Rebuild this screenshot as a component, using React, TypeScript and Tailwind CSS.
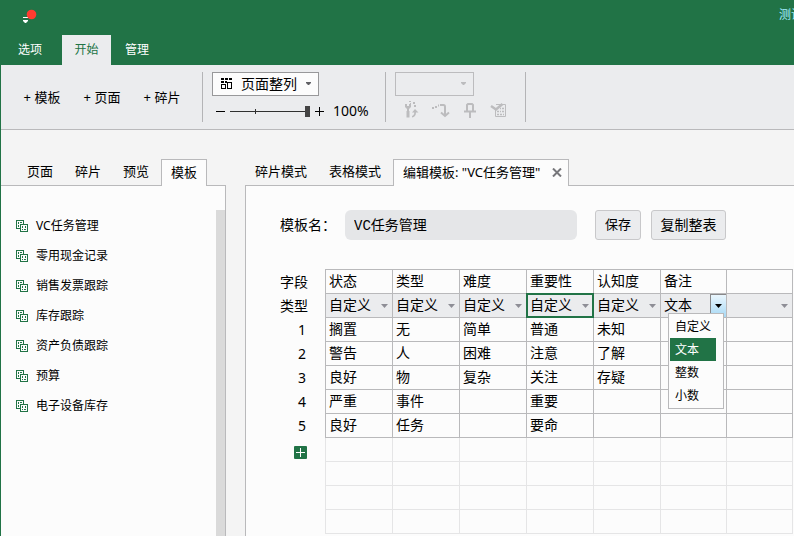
import React, { useState } from 'react';
import clsx from 'clsx';

const TYPES = ['自定义', '文本', '整数', '小数'];

const COLUMNS = [
  { name: '状态', type: '自定义' },
  { name: '类型', type: '自定义' },
  { name: '难度', type: '自定义' },
  { name: '重要性', type: '自定义' },
  { name: '认知度', type: '自定义' },
  { name: '备注', type: '文本' },
  { name: '', type: '' },
];

const ROWS = [
  ['搁置', '无', '简单', '普通', '未知', '', ''],
  ['警告', '人', '困难', '注意', '了解', '', ''],
  ['良好', '物', '复杂', '关注', '存疑', '', ''],
  ['严重', '事件', '', '重要', '', '', ''],
  ['良好', '任务', '', '要命', '', '', ''],
];

const EMPTY_ROWS = [0, 1, 2, 3];

const TEMPLATES = ['VC任务管理', '零用现金记录', '销售发票跟踪', '库存跟踪', '资产负债跟踪', '预算', '电子设备库存'];

const Arrow: React.FC<{ className?: string }> = ({ className }) => (
  <svg className={clsx('pointer-events-none', className)} width="7" height="4" viewBox="0 0 7 4" fill="currentColor" aria-hidden="true">
    <path d="M0 0h7L3.5 4z" />
  </svg>
);

const SmallArrow: React.FC<{ className?: string }> = ({ className }) => (
  <svg className={clsx('pointer-events-none', className)} width="5" height="3" viewBox="0 0 5 3" fill="currentColor" aria-hidden="true">
    <path d="M0 0h5v1L3 3H2L0 1z" />
  </svg>
);

const TemplateIcon: React.FC = () => (
  <svg className="shrink-0" width="12" height="12" viewBox="0 0 12 12" shapeRendering="crispEdges" aria-hidden="true">
    <path d="M4 8.5H.5v-8h7V4" fill="none" stroke="#217346" />
    <path d="M2 2h1v2H2zM4 2h2v1H4zM2 5h1v2H2z" fill="#217346" />
    <path d="M4.500 4.500h7v7h-7z" fill="#fcfcfc" stroke="#217346" />
    <path d="M6 6h1v2H6zM9 6h1v2H9zM6 9h1v1H6zM8 9h2v1H8z" fill="#217346" />
  </svg>
);

const LayoutIcon: React.FC = () => (
  <svg className="pointer-events-none absolute left-[9px] top-[6px]" width="12" height="11" viewBox="0 0 12 11" shapeRendering="crispEdges" aria-hidden="true">
    <path d="M0 0h3v2H0zM4 0h3v2H4zM8 0h3v2H8zM0 3h3v2H0zM4 3h2v2H4z" fill="#000" />
    <path d="M.5 6.500h4v4h-4zM6.500 4.500h4v6h-4z" fill="none" stroke="#000" />
  </svg>
);

const Divider: React.FC = () => <div className="h-[50px] w-px shrink-0 bg-[#b4b4b6]" />;

const TitleBar: React.FC = () => (
  <div className="flex h-[35px] items-start justify-between overflow-hidden pl-[21px]">
    <svg className="mt-[9px]" width="15" height="15" viewBox="0 0 15 15" aria-hidden="true">
      <path d="M1 8h5v1H1zM1 11h5v1L4 14H3L1 12z" fill="#fff" />
      <circle cx="9.500" cy="5.500" r="4.800" fill="#ff3b30" />
    </svg>
    <span className="mt-[6px] w-[15px] overflow-hidden whitespace-nowrap text-xs leading-[18px] text-[#a4ecff]">测试</span>
  </div>
);

const Ribbon: React.FC = () => {
  const [zoom, setZoom] = useState(100);

  return (
    <div className="flex h-[65px] items-start border-b border-[#b9b9bb] bg-[#ebecee] pt-[7px] text-sm">
      <div className="flex h-[50px] w-[201px] shrink-0 items-center gap-[22px] pl-[22px] text-[13px]">
        <button className="w-[38px] whitespace-nowrap">+ 模板</button>
        <button className="w-[38px] whitespace-nowrap">+ 页面</button>
        <button className="w-[38px] whitespace-nowrap">+ 碎片</button>
      </div>
      <Divider />
      <div className="flex w-[182px] shrink-0 flex-col pl-[9px]">
        <div className="relative w-[107px]">
          <LayoutIcon />
          <select aria-label="页面排列" className="block h-6 w-full appearance-none border border-[#98989a] bg-[#fcfcfc] pl-7 text-sm">
            <option>页面整列</option>
          </select>
          <SmallArrow className="absolute right-2 top-[10px] text-[#606064]" />
        </div>
        <div className="mt-1 flex h-[22px] items-center">
          <button aria-label="缩小" className="ml-1">
            <svg width="9" height="9" viewBox="0 0 9 9" shapeRendering="crispEdges">
              <path d="M0 4h9v1H0z" />
            </svg>
          </button>
          <div className="relative ml-[5px] flex h-3 w-20 items-center">
            <span className="absolute left-[25px] top-1 h-[5px] w-px bg-[#303030]" />
            <input
              type="range"
              aria-label="缩放"
              min={0}
              max={100}
              value={zoom}
              onChange={(e) => setZoom(Number(e.target.value))}
              className="h-3 w-20 appearance-none bg-transparent [&::-webkit-slider-runnable-track]:h-px [&::-webkit-slider-runnable-track]:bg-[#303030] [&::-webkit-slider-thumb]:-mt-[5px] [&::-webkit-slider-thumb]:h-[11px] [&::-webkit-slider-thumb]:w-[5px] [&::-webkit-slider-thumb]:appearance-none [&::-webkit-slider-thumb]:bg-[#444]"
            />
          </div>
          <button aria-label="放大" className="ml-[5px]">
            <svg width="9" height="9" viewBox="0 0 9 9" shapeRendering="crispEdges">
              <path d="M0 4h9v1H0zM4 0h1v9H4z" />
            </svg>
          </button>
          <span className="ml-[9px]">{zoom}%</span>
        </div>
      </div>
      <Divider />
      <div className="flex w-[139px] shrink-0 flex-col pl-[9px] text-[#bcbcbe]">
        <div className="relative w-[79px]">
          <select disabled aria-label="样式" className="block h-6 w-full appearance-none border border-[#bcbcbe] bg-transparent">
            <option></option>
          </select>
          <SmallArrow className="absolute right-2 top-[10px]" />
        </div>
        <div className="mt-[5px] flex items-center gap-3 pl-2">
          <button disabled aria-label="切换">
            <svg width="17" height="18" viewBox="0 0 17 18" fill="currentColor">
              <path d="M2 3h2v2h2V3h2v3L6 8v2h.5v6.500h-3V10H4V8L2 6z" />
              <path d="M6 0h2v1H6zM10 1h2v2h-2zM7 2h1v1H7zM11 4h2v2h-2z" />
              <path d="M9 11.500L12 8l3.500 3.500H13c0 3-1.500 4.500-4 5V15c1.500-.5 2.200-1.500 2.300-3.500z" />
            </svg>
          </button>
          <button disabled aria-label="重做">
            <svg width="18" height="18" viewBox="0 0 18 18" fill="none" stroke="currentColor" strokeWidth="2">
              <path d="M0 7h2M3 6h2M6 4.500h1M8 4h3.500Q13 4 13 6v9M9 11.500l4 3.500 4-3.500" />
            </svg>
          </button>
          <button disabled aria-label="固定">
            <svg width="16" height="18" viewBox="0 0 16 18" fill="none" stroke="currentColor" strokeWidth="2">
              <path d="M5 10V4l1-1h4l1 1v6M2 10.500h12M8 10v7" />
            </svg>
          </button>
          <button disabled aria-label="编辑表格">
            <svg width="17" height="18" viewBox="0 0 17 18" fill="none" stroke="currentColor">
              <path d="M6 3.500h9.500v12h-10V9" />
              <path d="M1 5l5 3.500L12.500 3" strokeWidth="2.500" />
              <path d="M7 10.500h2M10 10.500h1M12 10.500h2M7 13.500h2M10 13.500h2M13 13.500h1M10 7.500h1M12 7.500h2" strokeWidth="1.500" />
            </svg>
          </button>
        </div>
      </div>
      <Divider />
    </div>
  );
};

const Sidebar: React.FC = () => (
  <aside className="flex w-[225px] shrink-0 flex-col">
    <div className="flex h-[27px] items-stretch text-[13px]">
      <div className="flex flex-1 items-center gap-[22px] border-b border-[#b9b9bb] pl-[26px]">
        {['页面', '碎片', '预览'].map((tab) => (
          <button key={tab}>{tab}</button>
        ))}
      </div>
      <button className="w-[46px] border border-b-0 border-[#b9b9bb] bg-[#fcfcfc]">模板</button>
      <div className="w-[19px] border-b border-[#b9b9bb]" />
    </div>
    <div className="flex flex-1 border-r border-[#b9b9bb] bg-[#fcfcfc] pt-6">
      <ul className="flex-1 pl-[15px] pt-px text-xs">
        {TEMPLATES.map((name) => (
          <li key={name}>
            <button className="flex h-[30px] items-center gap-2">
              <TemplateIcon />
              {name}
            </button>
          </li>
        ))}
      </ul>
      <div className="w-[9px] bg-[#dadada]" />
    </div>
  </aside>
);

const TypeMenu: React.FC<{ value: string; onPick: (v: string) => void }> = ({ value, onPick }) => (
  <ul role="listbox" aria-label="字段类型" className="absolute left-[7px] top-[19px] z-10 w-14 border border-[#b9b9bb] bg-[#fcfcfc] p-px text-xs">
    {TYPES.map((type) => (
      <li key={type} role="option" aria-selected={type === value}>
        <button
          onClick={() => onPick(type)}
          className={clsx('block h-[23px] w-[46px] pl-[5px] text-left', type === value && 'bg-[#217346] text-white')}
        >
          {type}
        </button>
      </li>
    ))}
  </ul>
);

const FieldTable: React.FC = () => {
  const [noteType, setNoteType] = useState('文本');

  const cell = 'border-b border-r border-[#b9b9bb]';
  const head = 'border-r border-[#b9b9bb] pr-[17px] text-right font-normal';

  return (
    <table className="w-[513px] table-fixed border-separate border-spacing-0 text-left text-sm leading-5">
      <colgroup>
        <col className="w-[46px]" />
        {COLUMNS.map((col, i) => (
          <col key={i} className={i < 5 ? 'w-[67px]' : 'w-[66px]'} />
        ))}
      </colgroup>
      <tbody>
        <tr className="h-[25px]">
          <th className={head}>字段</th>
          {COLUMNS.map((col, i) => (
            <td key={i} className={clsx(cell, 'border-t pb-0.5 pl-[3px]')}>{col.name}</td>
          ))}
        </tr>
        <tr className="h-6">
          <th className={head}>类型</th>
          {COLUMNS.map((col, i) => (
            <td key={i} className={clsx(cell, 'relative bg-[#ebecee] p-0')}>
              {col.name === '备注' ? (
                <>
                  <button aria-haspopup="listbox" aria-expanded="true" className="flex h-[23px] w-full items-center pl-[3px]">
                    <span className="flex-1 pb-0.5 text-left">{noteType}</span>
                    <span className="flex h-full w-4 items-center justify-center border-l border-t border-[#88888a] bg-linear-to-b from-[#eaf6fd] to-[#a7d9f5]">
                      <Arrow />
                    </span>
                  </button>
                  <TypeMenu value={noteType} onPick={setNoteType} />
                </>
              ) : (
                <>
                  <select aria-label={col.name || '新字段'} defaultValue={col.type} className="block h-[23px] w-full appearance-none pb-0.5 pl-[3px] outline-none">
                    {!col.type && <option value=""></option>}
                    {TYPES.map((type) => (
                      <option key={type}>{type}</option>
                    ))}
                  </select>
                  <Arrow className="absolute right-1 top-[10px] text-[#8e8e96]" />
                </>
              )}
              {col.name === '重要性' && (
                <span className="pointer-events-none absolute -inset-px border-2 border-[#217346]" />
              )}
            </td>
          ))}
        </tr>
        {ROWS.map((row, r) => (
          <tr key={r} className="h-6">
            <th className={clsx(head, 'pr-[19px]')}>{r + 1}</th>
            {row.map((value, i) => (
              <td key={i} className={clsx(cell, 'pb-0.5 pl-[3px]')}>{value}</td>
            ))}
          </tr>
        ))}
        {EMPTY_ROWS.map((r) => (
          <tr key={r} className="h-6">
            <th className="border-r border-[#e5e5e6] pl-[14px]">
              {r === 0 && (
                <button aria-label="添加行" className="mt-1 block">
                  <svg width="13" height="13" viewBox="0 0 13 13">
                    <rect width="13" height="13" rx="1" fill="#217346" />
                    <path d="M2 6h9v1H2zM6 2h1v9H6z" fill="#fff" />
                  </svg>
                </button>
              )}
            </th>
            {COLUMNS.map((col, i) => (
              <td key={i} className="border-b border-r border-[#e5e5e6]" />
            ))}
          </tr>
        ))}
      </tbody>
    </table>
  );
};

const Editor: React.FC = () => {
  const [name, setName] = useState('VC任务管理');

  return (
    <main className="ml-[19px] flex min-w-0 flex-1 flex-col">
      <div className="flex h-[27px] items-stretch text-[13px]">
        <div className="flex w-[148px] shrink-0 items-center gap-[22px] border-b border-[#b9b9bb] pl-[10px]">
          <button>碎片模式</button>
          <button>表格模式</button>
        </div>
        <div className="flex w-[176px] shrink-0 items-center justify-between border border-b-0 border-[#b9b9bb] bg-[#fcfcfc] pb-px pl-[9px] pr-[6px]">
          <button className="whitespace-nowrap">编辑模板: "VC任务管理"</button>
          <button aria-label="关闭">
            <svg width="10" height="9" viewBox="0 0 10 9" stroke="#77777b" strokeWidth="2">
              <path d="M1 .5l8 8M9 .5l-8 8" />
            </svg>
          </button>
        </div>
        <div className="flex-1 border-b border-[#b9b9bb]" />
      </div>
      <div className="flex-1 overflow-hidden border-l border-[#b9b9bb] bg-[#fcfcfc] pl-[34px] pt-6">
        <div className="flex items-center">
          <label htmlFor="template-name" className="w-[65px] shrink-0 text-sm">模板名：</label>
          <input
            id="template-name"
            value={name}
            onChange={(e) => setName(e.target.value)}
            className="h-[30px] w-[232px] rounded-md bg-[#e5e6e8] px-[9px] pb-0.5 font-['Liberation_Mono','Noto_Sans_CJK_SC',monospace] text-sm outline-none"
          />
          <button className="ml-[18px] h-[30px] w-[46px] rounded-[3px] border border-[#c8c8ca] bg-[#ebecee] text-[13px]">保存</button>
          <button className="ml-[10px] h-[30px] w-[75px] rounded-[3px] border border-[#c8c8ca] bg-[#ebecee] text-sm">复制整表</button>
        </div>
        <div className="mt-[29px]">
          <FieldTable />
        </div>
      </div>
    </main>
  );
};

const App: React.FC = () => (
  <div className="flex h-screen flex-col overflow-hidden border-l border-[#217346] bg-[#f4f4f4] font-['Noto_Sans','Noto_Sans_CJK_SC',sans-serif] text-black">
    <header className="shrink-0 bg-[#217346]">
      <TitleBar />
      <nav className="flex h-[30px] items-stretch text-xs text-white">
        <button className="w-[61px] pr-[3px]">选项</button>
        <button className="w-[49px] bg-[#ebecee] text-[#217346]">开始</button>
        <button className="w-[52px]">管理</button>
      </nav>
    </header>
    <Ribbon />
    <div className="flex min-h-0 flex-1 pt-[29px]">
      <Sidebar />
      <Editor />
    </div>
  </div>
);

export default App;
